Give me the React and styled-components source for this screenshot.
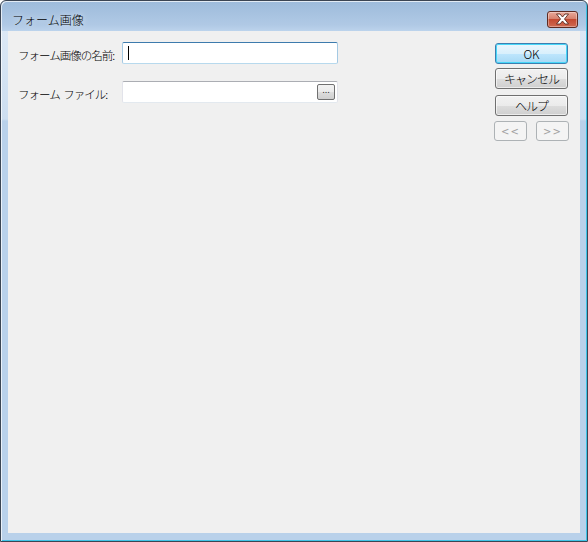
import styled, { createGlobalStyle } from "styled-components";

const GlobalStyle = createGlobalStyle`
  html, body {
    margin: 0;
    padding: 0;
    background: #ffffff;
  }
  body {
    font-family: "Noto Sans CJK JP", "Noto Sans", sans-serif;
    font-size: 12px;
    color: #000;
  }
`;

const Window = styled.div`
  width: 588px;
  height: 542px;
  box-sizing: border-box;
  border: 1px solid #3b4553;
  border-radius: 6px 6px 0 0;
  box-shadow: inset 1px 1px 0 rgba(255, 255, 255, 0.7), inset -1px -1px 0 #3fc3e6;
  background: linear-gradient(
    to bottom,
    #9dbbdb 0px,
    #b0c9e5 24px,
    #bcd3ec 30px,
    #dce8f5 30px,
    #cddef0 118px,
    #b9d1ea 120px,
    #b9d1ea 100%
  );
  display: flex;
  flex-direction: column;
  padding: 0 7px 8px 7px;
  overflow: hidden;
`;

const TitleBar = styled.div`
  height: 30px;
  display: flex;
  align-items: center;
  padding: 6px 2px 0 4px;
  box-sizing: border-box;
`;

const Title = styled.span`
  font-size: 12px;
  font-weight: 300;
  color: #000;
  text-shadow: 0 0 6px rgba(255, 255, 255, 0.8);
`;

const CloseButton = styled.div`
  margin-left: auto;
  width: 31px;
  height: 17px;
  box-sizing: border-box;
  border: 1px solid #5e2b22;
  border-radius: 3px;
  background: linear-gradient(to bottom, #e9a99a 0%, #d7826e 45%, #c44a31 50%, #cf6a52 100%);
  box-shadow: inset 0 0 0 1px rgba(255, 255, 255, 0.35);
  display: flex;
  align-items: center;
  justify-content: center;
`;

const Client = styled.div`
  flex: 1;
  background: #f0f0f0;
  display: flex;
  justify-content: space-between;
  padding: 11px 11px 0 10px;
`;

const Form = styled.div`
  display: flex;
  flex-direction: column;
  gap: 17px;
`;

const Row = styled.div`
  display: flex;
  align-items: center;
`;

const Label = styled.label`
  width: 104px;
  font-size: 11.5px;
  font-weight: 300;
  letter-spacing: -1px;
  word-spacing: 2px;
  padding-top: 4px;
  color: #000;
  white-space: pre;
`;

const Field = styled.div`
  width: 216px;
  height: 22px;
  box-sizing: border-box;
  background: #fff;
  border: 1px solid;
  border-color: ${(p) => (p.$focused ? "#3d7bad #a4c9e3 #b7d9ed #a4c9e3" : "#abadb3 #e2e3ea #e3e9ef #e2e3ea")};
  border-radius: 2px;
  display: flex;
  align-items: center;
  padding: 0 2px 0 5px;
`;

const Caret = styled.span`
  width: 1px;
  height: 14px;
  background: #000;
`;

const Browse = styled.div`
  margin-left: auto;
  width: 18px;
  height: 16px;
  box-sizing: border-box;
  border: 1px solid #707070;
  border-radius: 2px;
  background: linear-gradient(to bottom, #f2f2f2 0%, #ebebeb 50%, #dddddd 51%, #cfcfcf 100%);
  font-family: "DejaVu Sans", sans-serif;
  font-size: 8px;
  line-height: 12px;
  text-align: center;
  color: #222;
`;

const ButtonColumn = styled.div`
  display: flex;
  flex-direction: column;
  padding-top: 1px;
`;

const Button = styled.div`
  width: 73px;
  height: 21px;
  box-sizing: border-box;
  margin-bottom: ${(p) => p.$gap || 0}px;
  border: 1px solid ${(p) => (p.$default ? "#3c7fb1" : "#707070")};
  border-radius: 3px;
  background: ${(p) =>
    p.$default
      ? "linear-gradient(to bottom, #eaf6fd 0%, #d9f0fc 50%, #bee6fd 51%, #a7d9f5 100%)"
      : "linear-gradient(to bottom, #f2f2f2 0%, #ebebeb 50%, #dddddd 51%, #cfcfcf 100%)"};
  box-shadow: inset 0 0 0 1px ${(p) => (p.$default ? "#48d7f8" : "rgba(255,255,255,0.6)")};
  display: flex;
  align-items: center;
  justify-content: center;
  font-size: 12px;
  font-weight: 300;
  letter-spacing: ${(p) => (p.$tight ? "-1px" : "0")};
  color: #000;
`;

const NavRow = styled.div`
  display: flex;
  gap: 9px;
  margin-left: -1px;
`;

const NavButton = styled.div`
  width: 33px;
  height: 20px;
  box-sizing: border-box;
  border: 1px solid #adb2b5;
  border-radius: 3px;
  background: #f4f4f4;
  display: flex;
  align-items: center;
  justify-content: center;
  font-family: "DejaVu Sans", sans-serif;
  font-size: 10px;
  letter-spacing: 1px;
  color: #a0a0a0;
`;

export default function App() {
  return (
    <>
      <GlobalStyle />
      <Window>
        <TitleBar>
          <Title>フォーム画像</Title>
          <CloseButton>
            <svg width="15" height="12" viewBox="0 0 15 12">
              <path
                d="M1.5 1 L5 1 L7.5 4 L10 1 L13.5 1 L9.5 6 L13.5 11 L10 11 L7.5 8 L5 11 L1.5 11 L5.5 6 Z"
                fill="#ffffff"
                stroke="#5a2a20"
                strokeWidth="0.9"
                strokeLinejoin="round"
              />
            </svg>
          </CloseButton>
        </TitleBar>
        <Client>
          <Form>
            <Row>
              <Label>フォーム画像の名前:</Label>
              <Field $focused>
                <Caret />
              </Field>
            </Row>
            <Row>
              <Label>フォーム ファイル:</Label>
              <Field>
                <Browse>...</Browse>
              </Field>
            </Row>
          </Form>
          <ButtonColumn>
            <Button $default $gap={4}>OK</Button>
            <Button $gap={6} $tight>キャンセル</Button>
            <Button $gap={5} $tight>ヘルプ</Button>
            <NavRow>
              <NavButton>&lt;&lt;</NavButton>
              <NavButton>&gt;&gt;</NavButton>
            </NavRow>
          </ButtonColumn>
        </Client>
      </Window>
    </>
  );
}
